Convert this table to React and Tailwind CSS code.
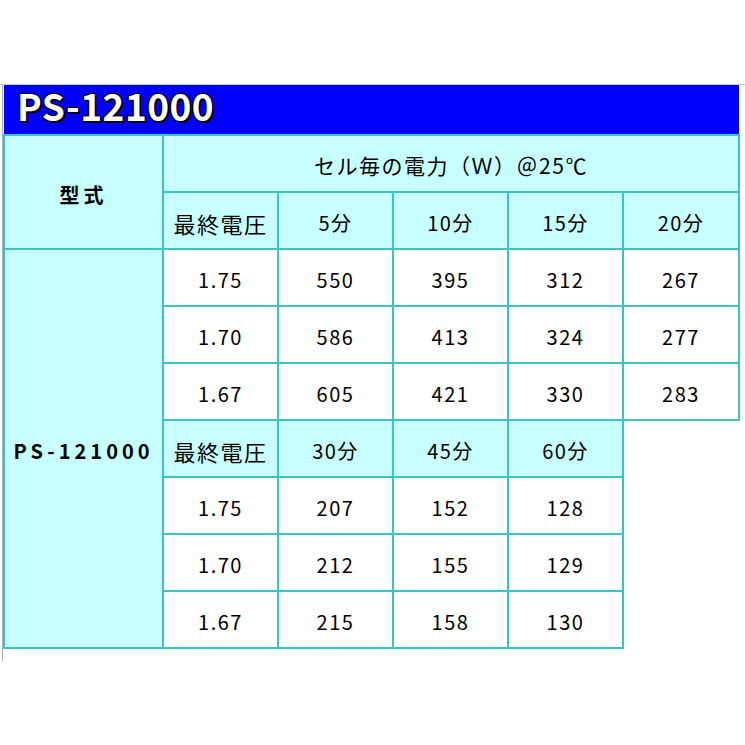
const font = { fontFamily: '"Noto Sans CJK JP", "Noto Sans", sans-serif' }

const upper = [
  ['1.75', '550', '395', '312', '267'],
  ['1.70', '586', '413', '324', '277'],
  ['1.67', '605', '421', '330', '283'],
]

const lower = [
  ['1.75', '207', '152', '128'],
  ['1.70', '212', '155', '129'],
  ['1.67', '215', '158', '130'],
]

const cell = 'border-2 border-[#3cc4c4] h-[57px] p-0 pt-[5px] text-center align-middle text-[20px] tracking-[1.5px] text-black'

function App() {
  return (
    <div className="w-[745px] h-[745px] bg-white overflow-hidden" style={font}>
      <div className="h-[84px]" />
      <div className="border-t border-[#c8ccd8] pl-[2px]">
        <div className="border-l border-[#a8b0c4] w-fit pb-[12px]">
          <table className="table-fixed border-collapse">
            <colgroup>
              <col className="w-[159px]" />
              <col className="w-[115px]" />
              <col className="w-[115px]" />
              <col className="w-[115px]" />
              <col className="w-[115px]" />
              <col className="w-[116px]" />
            </colgroup>
            <tbody>
              <tr>
                <td colSpan={6} className="h-[50px] bg-[#0000ff] p-0 border-0">
                  <div
                    className="pl-[13px] pb-[8px] text-[37px] font-bold leading-none tracking-[0.5px] text-white"
                    style={{ textShadow: '1px 1px 0 #000, -1px -1px 0 #000, 1px -1px 0 #000, -1px 1px 0 #000, 2px 2px 0 #000' }}
                  >
                    PS-121000
                  </div>
                </td>
              </tr>
              <tr className="bg-[#c8ffff]">
                <td rowSpan={2} className={`${cell} font-bold tracking-[4px]`}>型式</td>
                <td colSpan={5} className={`${cell} tracking-[0px] text-[21px]`}>セル毎の電力（Ｗ）＠25℃</td>
              </tr>
              <tr className="bg-[#c8ffff]">
                <td className={`${cell} tracking-[0px] text-[22px]`}>最終電圧</td>
                <td className={cell}>5分</td>
                <td className={cell}>10分</td>
                <td className={cell}>15分</td>
                <td className={cell}>20分</td>
              </tr>
              {upper.map((row, i) => (
                <tr key={'u' + i}>
                  {i === 0 && (
                    <td rowSpan={7} className={`${cell} bg-[#c8ffff] font-bold tracking-[4px]`}>
                      PS-121000
                    </td>
                  )}
                  {row.map((v, j) => (
                    <td key={j} className={`${cell} bg-white`}>{v}</td>
                  ))}
                </tr>
              ))}
              <tr>
                <td className={`${cell} bg-[#c8ffff] tracking-[0px] text-[22px]`}>最終電圧</td>
                <td className={`${cell} bg-[#c8ffff]`}>30分</td>
                <td className={`${cell} bg-[#c8ffff]`}>45分</td>
                <td className={`${cell} bg-[#c8ffff]`}>60分</td>
                <td rowSpan={4} className="border-0 bg-white" />
              </tr>
              {lower.map((row, i) => (
                <tr key={'l' + i}>
                  {row.map((v, j) => (
                    <td key={j} className={`${cell} bg-white`}>{v}</td>
                  ))}
                </tr>
              ))}
            </tbody>
          </table>
        </div>
      </div>
    </div>
  )
}

export default App
